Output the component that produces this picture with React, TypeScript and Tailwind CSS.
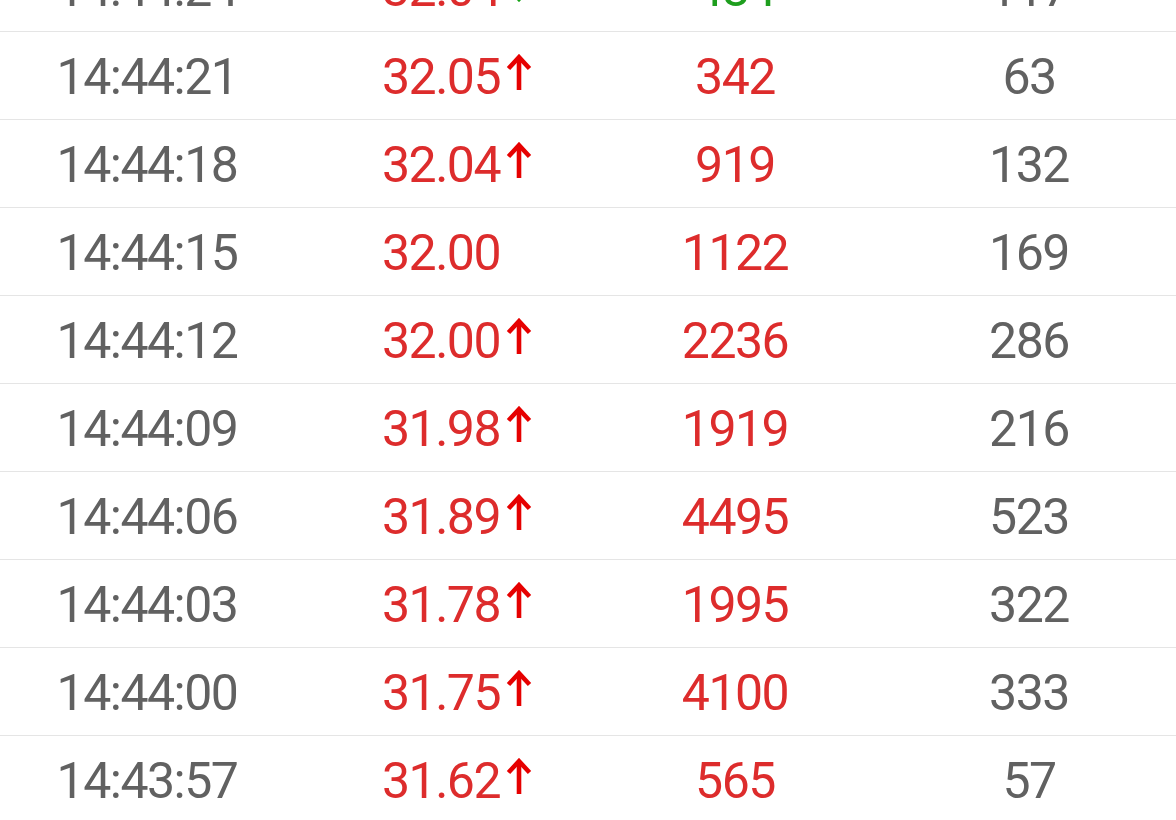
import React from "react";

type Row = { t: string; p: string; dir: "up" | "down" | null; v: string; sell?: boolean; n: string };

const rows: Row[] = [
  { t: "14:44:24", p: "32.04", dir: "down", v: "484", sell: true, n: "117" },
  { t: "14:44:21", p: "32.05", dir: "up", v: "342", n: "63" },
  { t: "14:44:18", p: "32.04", dir: "up", v: "919", n: "132" },
  { t: "14:44:15", p: "32.00", dir: null, v: "1122", n: "169" },
  { t: "14:44:12", p: "32.00", dir: "up", v: "2236", n: "286" },
  { t: "14:44:09", p: "31.98", dir: "up", v: "1919", n: "216" },
  { t: "14:44:06", p: "31.89", dir: "up", v: "4495", n: "523" },
  { t: "14:44:03", p: "31.78", dir: "up", v: "1995", n: "322" },
  { t: "14:44:00", p: "31.75", dir: "up", v: "4100", n: "333" },
  { t: "14:43:57", p: "31.62", dir: "up", v: "565", n: "57" },
];

function Arrow({ dir }: { dir: "up" | "down" }) {
  const color = dir === "up" ? "#e60000" : "#16a316";
  return (
    <svg
      width="26"
      height="36"
      viewBox="0 0 26 36"
      className={dir === "down" ? "rotate-180" : ""}
      fill="none"
      stroke={color}
      strokeWidth="4.6"
      strokeLinecap="butt"
      strokeLinejoin="miter"
    >
      <path d="M13 4 V36" />
      <path d="M2.5 14.5 L13 3.2 L23.5 14.5" />
    </svg>
  );
}

export default function App() {
  return (
    <div
      className="w-[1176px] h-[820px] overflow-hidden bg-white"
      style={{ fontFamily: "Roboto, 'Liberation Sans', sans-serif" }}
    >
      <div className="-mt-[56px] flex flex-col">
        {rows.map((r, i) => (
          <div
            key={i}
            className="grid grid-cols-4 h-[88px] border-b border-[#e5e5e5] items-center text-[50px] leading-none tracking-[-1.5px] pt-[3px]"
          >
            <div className="text-center text-[#616161]">{r.t}</div>
            <div className="text-center text-[#dd2c2c]">
              <span className="relative inline-block">
                {r.p}
                {r.dir && (
                  <span className="absolute left-full top-[2px] ml-[6px]">
                    <Arrow dir={r.dir} />
                  </span>
                )}
              </span>
            </div>
            <div className={`text-center ${r.sell ? "text-[#1e9e1e]" : "text-[#dd2c2c]"}`}>{r.v}</div>
            <div className="text-center text-[#616161]">{r.n}</div>
          </div>
        ))}
      </div>
    </div>
  );
}
